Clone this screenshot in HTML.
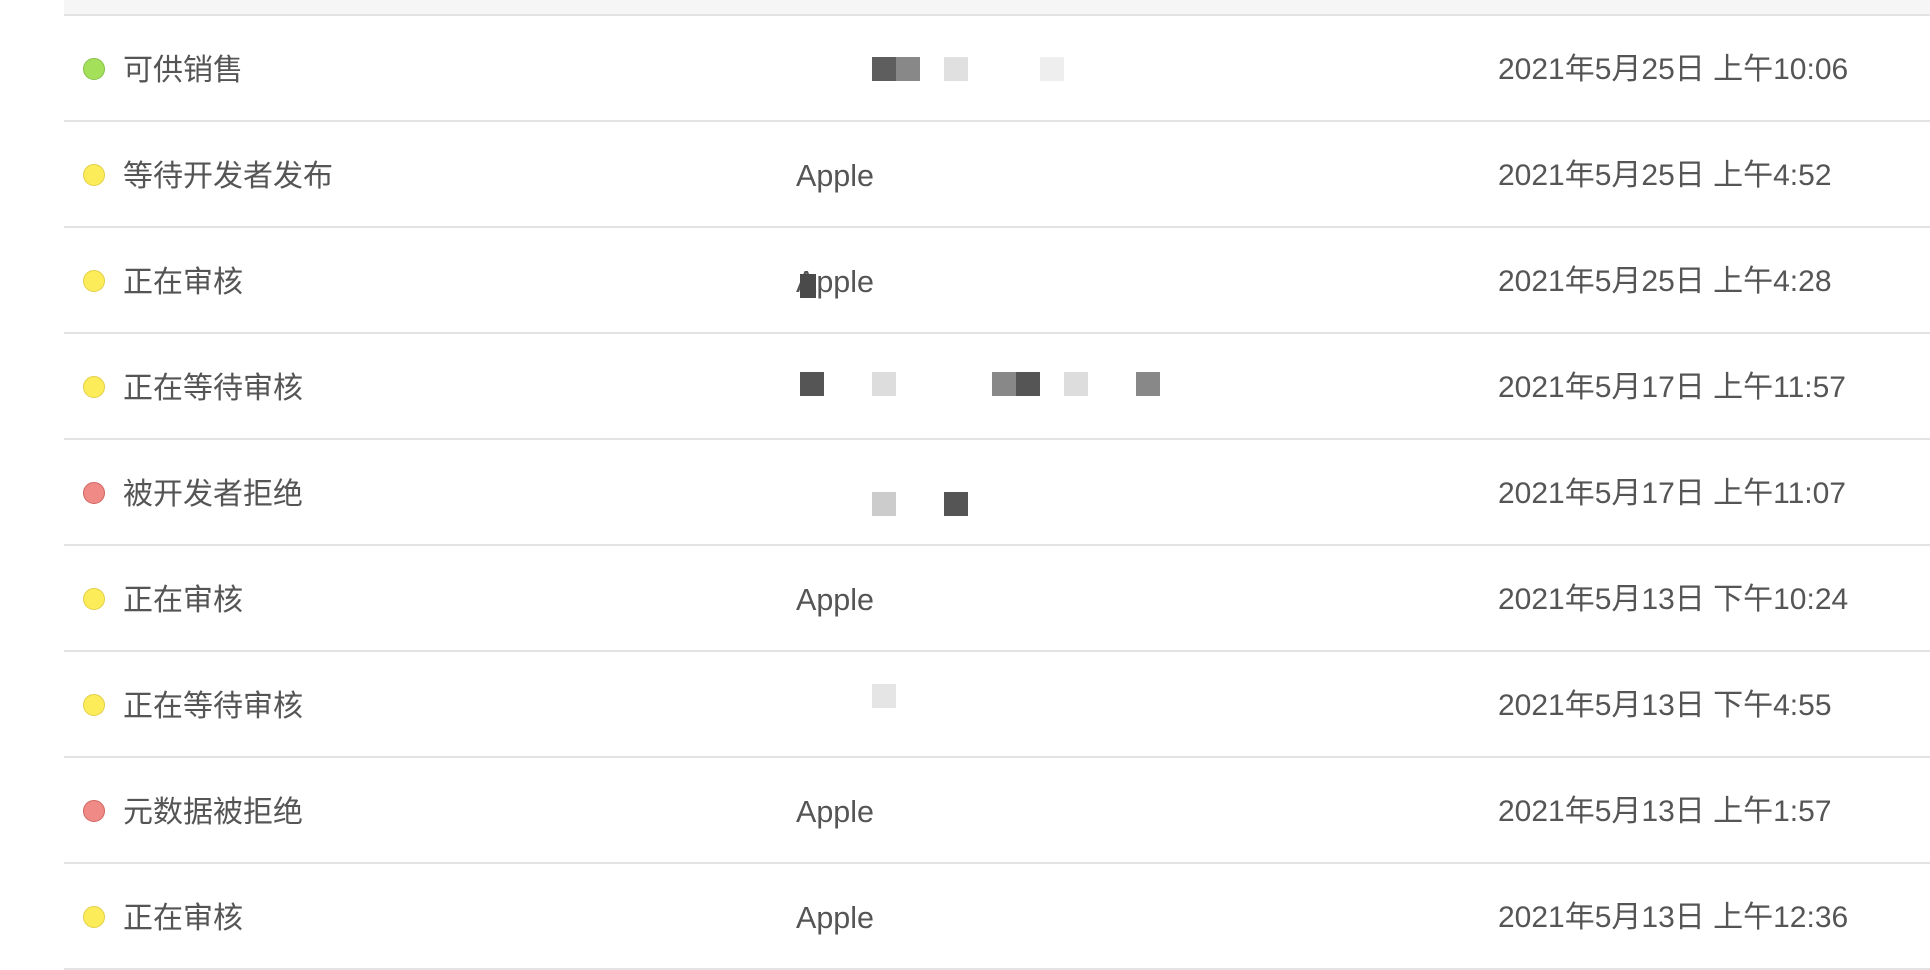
<!DOCTYPE html>
<html><head><meta charset="utf-8"><style>
body{margin:0;width:1930px;height:946px;background:#fff;overflow:hidden;font-family:"Liberation Sans","Noto Sans CJK SC",sans-serif;color:#555;position:relative}
.top{position:absolute;left:64px;top:0;width:1866px;height:14px;background:#f6f6f6;border-bottom:2px solid #e3e3e3}
.row{position:absolute;left:64px;width:1866px;height:104px;border-bottom:2px solid #e3e3e3}
.dot{position:absolute;left:19px;top:42px;width:22px;height:22px;border-radius:50%;box-sizing:border-box}
.g{background:#a5e05a;border:1.5px solid #86c24a}
.y{background:#fdec5a;border:1.5px solid #e2cf48}
.r{background:#f08a86;border:1.5px solid #d06460}
.st{position:absolute;left:59px;top:35px;font-size:30px;line-height:40px}
.app{position:absolute;left:732px;top:34px;font-size:30.5px;line-height:40px;font-family:"Liberation Sans",sans-serif}
.dt{position:absolute;left:1434px;top:34px;font-size:30px;line-height:40px}
.b{position:absolute;width:24px;height:24px}
</style></head><body>
<div class="top"></div>
<div class="row" style="top:16px"><div class="dot g"></div><div class="st">可供销售</div><div class="dt">2021年5月25日 上午10:06</div></div>
<div class="row" style="top:122px"><div class="dot y"></div><div class="st">等待开发者发布</div><div class="app">Apple</div><div class="dt">2021年5月25日 上午4:52</div></div>
<div class="row" style="top:228px"><div class="dot y"></div><div class="st">正在审核</div><div class="app">Apple</div><div class="dt">2021年5月25日 上午4:28</div></div>
<div class="row" style="top:334px"><div class="dot y"></div><div class="st">正在等待审核</div><div class="dt">2021年5月17日 上午11:57</div></div>
<div class="row" style="top:440px"><div class="dot r"></div><div class="st">被开发者拒绝</div><div class="dt">2021年5月17日 上午11:07</div></div>
<div class="row" style="top:546px"><div class="dot y"></div><div class="st">正在审核</div><div class="app">Apple</div><div class="dt">2021年5月13日 下午10:24</div></div>
<div class="row" style="top:652px"><div class="dot y"></div><div class="st">正在等待审核</div><div class="dt">2021年5月13日 下午4:55</div></div>
<div class="row" style="top:758px"><div class="dot r"></div><div class="st">元数据被拒绝</div><div class="app">Apple</div><div class="dt">2021年5月13日 上午1:57</div></div>
<div class="row" style="top:864px"><div class="dot y"></div><div class="st">正在审核</div><div class="app">Apple</div><div class="dt">2021年5月13日 上午12:36</div></div>
<div class="b" style="left:872px;top:57px;background:#5e5e5e"></div>
<div class="b" style="left:896px;top:57px;background:#888"></div>
<div class="b" style="left:944px;top:57px;background:#e0e0e0"></div>
<div class="b" style="left:1040px;top:57px;background:#eee"></div>
<div class="b" style="left:800px;top:372px;background:#555"></div>
<div class="b" style="left:872px;top:372px;background:#ddd"></div>
<div class="b" style="left:992px;top:372px;background:#888"></div>
<div class="b" style="left:1016px;top:372px;background:#555"></div>
<div class="b" style="left:1064px;top:372px;background:#ddd"></div>
<div class="b" style="left:1136px;top:372px;background:#888"></div>
<div class="b" style="left:872px;top:492px;background:#ccc"></div>
<div class="b" style="left:944px;top:492px;background:#555"></div>
<div class="b" style="left:872px;top:684px;background:#e5e5e5"></div>
<div class="b" style="left:800px;top:274px;width:16px;background:#4a4a4a"></div>
</body></html>
